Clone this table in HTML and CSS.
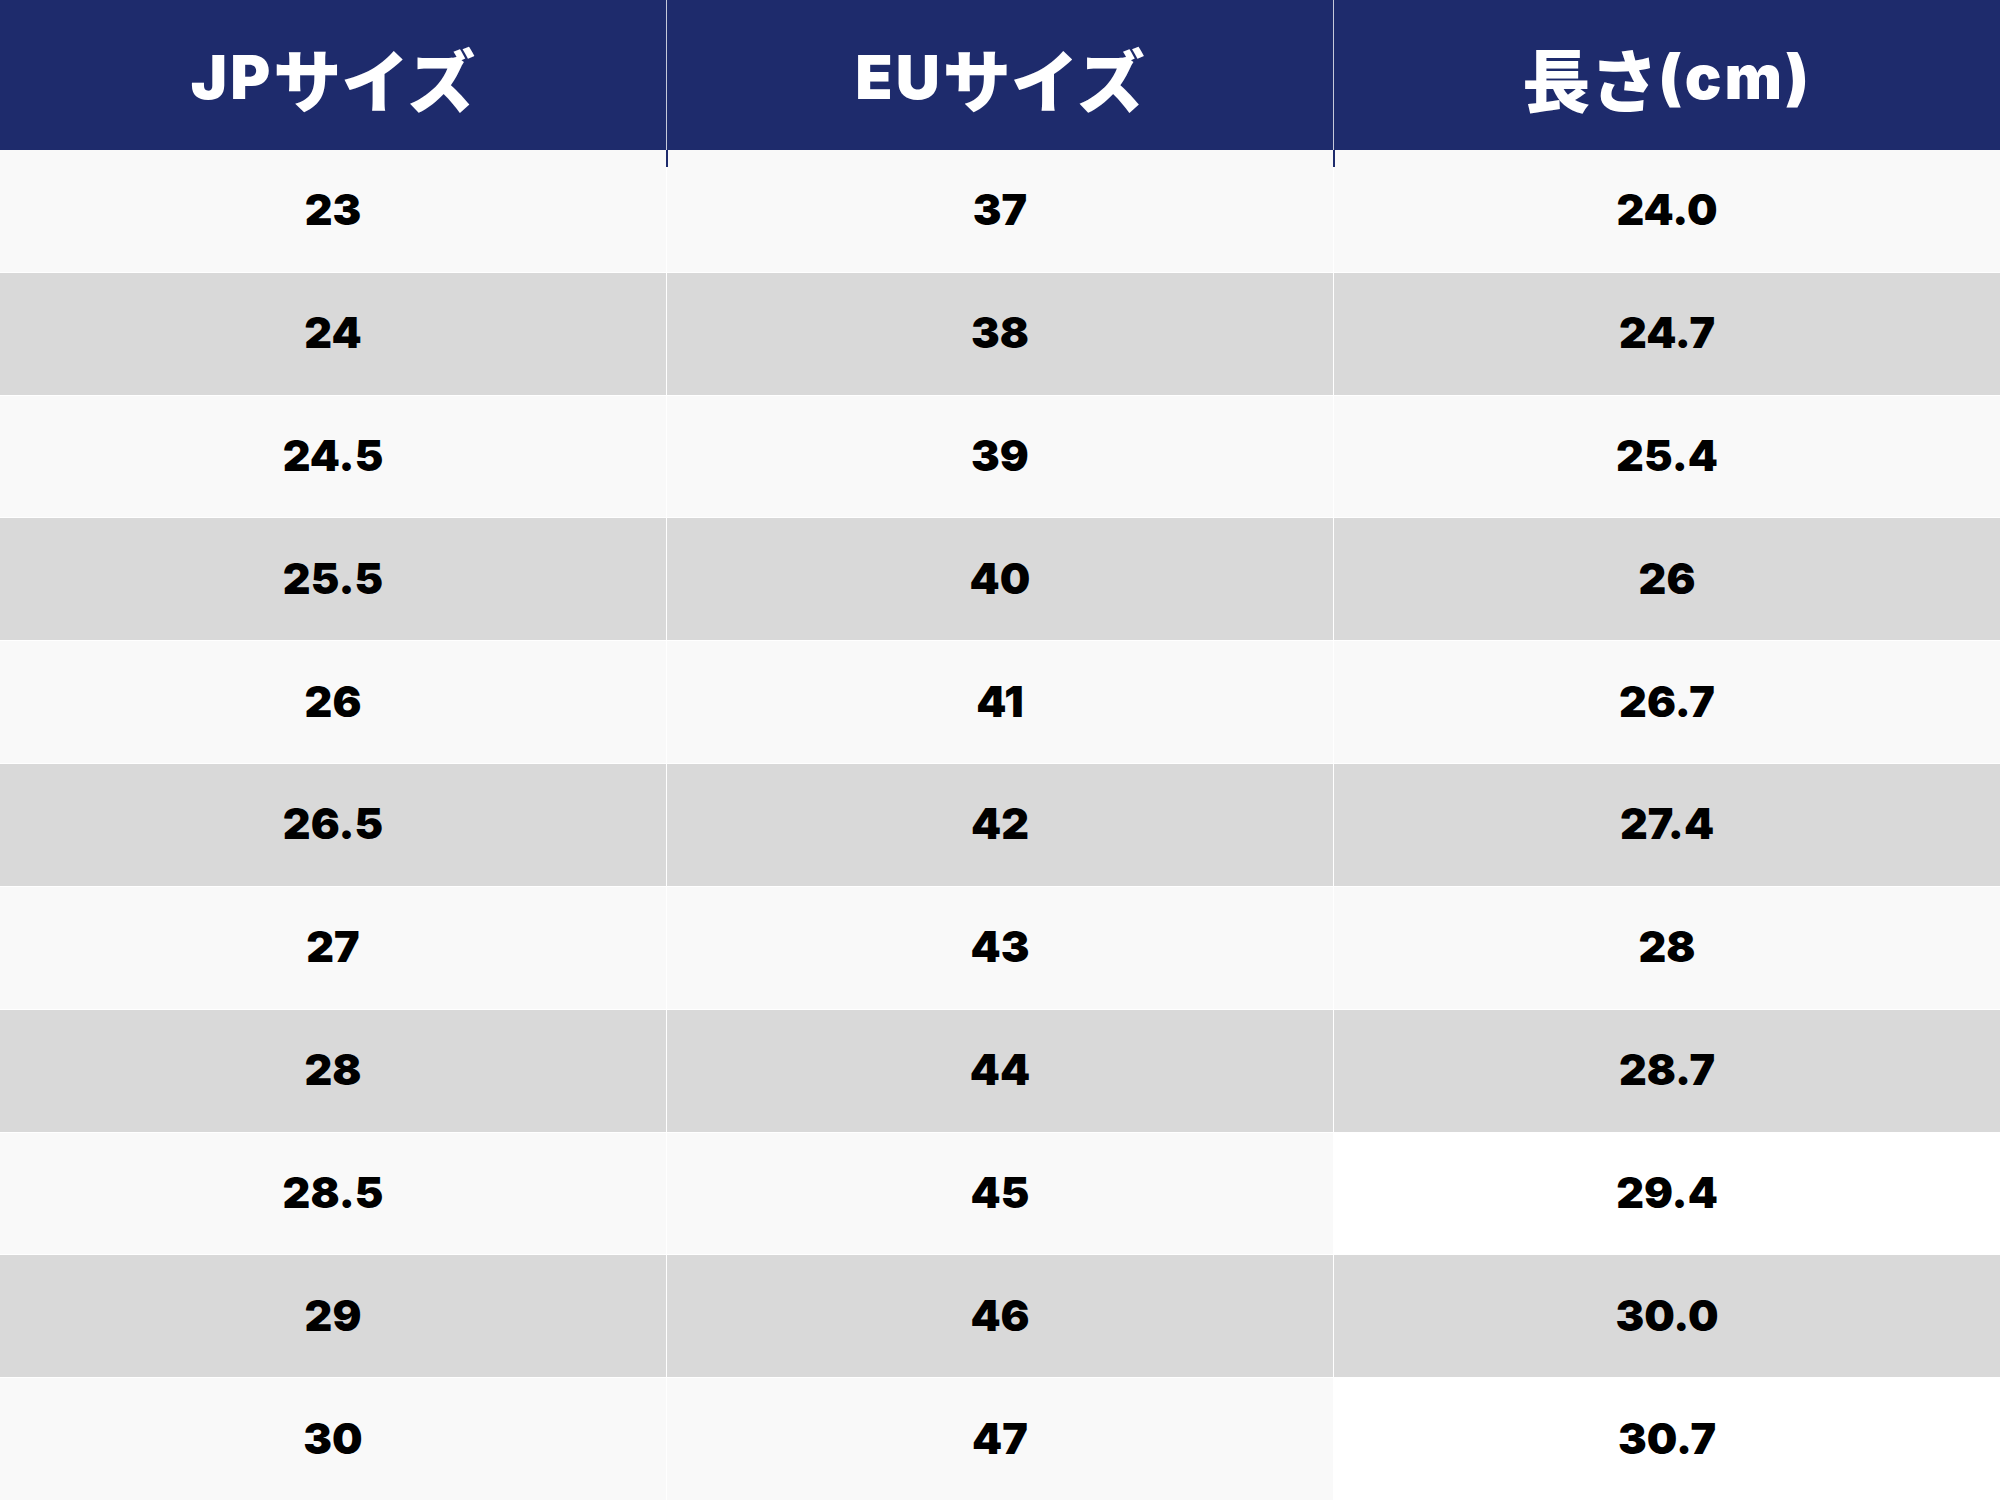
FILE: index.html
```html
<!DOCTYPE html>
<html lang="ja">
<head>
<meta charset="utf-8">
<title>サイズ表</title>
<link rel="stylesheet" href="styles.css">
</head>
<body>
<div class="chart">
  <div class="head">
    <div class="hcell hcell-stub"><span class="lat">JP</span>サイズ</div>
    <div class="hcell hcell-stub"><span class="lat">EU</span>サイズ</div>
    <div class="hcell">長さ<span class="lat">(cm)</span></div>
  </div>
  <div class="body">
    <div class="cell light">23</div><div class="cell light">37</div><div class="cell light">24.0</div>
    <div class="cell gray">24</div><div class="cell gray">38</div><div class="cell gray">24.7</div>
    <div class="cell light">24.5</div><div class="cell light">39</div><div class="cell light">25.4</div>
    <div class="cell gray">25.5</div><div class="cell gray">40</div><div class="cell gray">26</div>
    <div class="cell light">26</div><div class="cell light">41</div><div class="cell light">26.7</div>
    <div class="cell gray">26.5</div><div class="cell gray">42</div><div class="cell gray">27.4</div>
    <div class="cell light">27</div><div class="cell light">43</div><div class="cell light">28</div>
    <div class="cell gray">28</div><div class="cell gray">44</div><div class="cell gray">28.7</div>
    <div class="cell light">28.5</div><div class="cell light">45</div><div class="cell white">29.4</div>
    <div class="cell gray">29</div><div class="cell gray">46</div><div class="cell gray">30.0</div>
    <div class="cell light">30</div><div class="cell light">47</div><div class="cell white">30.7</div>
  </div>
</div>
</body>
</html>
```

FILE: styles.css
```css
html, body {
  margin: 0;
  padding: 0;
  background: #ffffff;
}

.chart {
  width: 2000px;
  height: 1500px;
  display: flex;
  flex-direction: column;
  overflow: hidden;
}

.head {
  height: 150px;
  display: grid;
  grid-template-columns: 667px 667px 1fr;
  background: #1e2b6c;
  flex: none;
}

.hcell {
  position: relative;
  display: flex;
  align-items: center;
  justify-content: center;
  color: #ffffff;
  font-family: "Inter", "Noto Sans CJK JP", sans-serif;
  font-weight: 800;
  font-size: 68px;
  padding-top: 4px;
  box-sizing: border-box;
  border-right: 1px solid rgba(255, 255, 255, 0.75);
}

.hcell:last-child {
  border-right: none;
}

.lat {
  font-size: 61px;
  font-weight: 900;
  letter-spacing: 3px;
}

.hcell-stub::after {
  content: "";
  position: absolute;
  right: -2px;
  bottom: -17px;
  width: 2px;
  height: 17px;
  background: #1e2b6c;
  z-index: 2;
}

.body {
  flex: 1;
  display: grid;
  grid-template-columns: 666px 666px 1fr;
  grid-auto-rows: 1fr;
  column-gap: 1px;
  row-gap: 1px;
  background: #ffffff;
}

.cell {
  display: flex;
  align-items: center;
  justify-content: center;
  padding-bottom: 3px;
  font-family: "Inter", sans-serif;
  font-weight: 900;
  font-size: 43px;
  color: #000000;
}

.light {
  background: #f9f9f9;
}

.gray {
  background: #d9d9d9;
}

.white {
  background: #ffffff;
}
```
